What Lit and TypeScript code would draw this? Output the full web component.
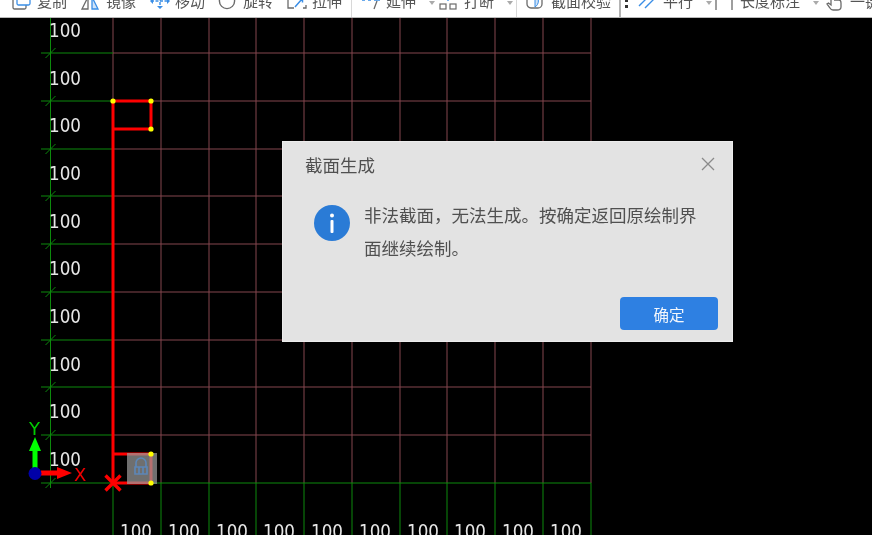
import { LitElement, html, css, svg } from "lit";
import { customElement } from "lit/decorators.js";

const XS = [113, 161, 209, 256, 304, 352, 400, 447, 495, 543, 591];
const YS = [53, 101, 149, 196, 244, 292, 340, 387, 435, 483];
const PINK = "#84464f";
const GREEN = "#0c8a0c";

type Tool = { w: number; label: string; caret?: boolean; icon: unknown; sep?: "thin" | "thick" };
const G = "#6b6b6b";
const B = "#3a8ee6";
const ic = (body: unknown) => svg`<svg class="ico" viewBox="0 0 20 24" width="20" height="24">${body}</svg>`;

const TOOLS: Tool[] = [
  { w: 69, label: "复制", icon: ic(svg`<rect x="1" y="4" width="13" height="13" rx="1.5" fill="none" stroke=${G} stroke-width="1.3"/><rect x="5" y="0" width="13" height="13" rx="1.5" fill="#fff" stroke=${B} stroke-width="1.3"/>`) },
  { w: 69, label: "镜像", icon: ic(svg`<path d="M1 17 L7 5 V17 Z" fill="none" stroke=${G} stroke-width="1.3"/><path d="M17 17 L11 5 V17 Z" fill="#cfe3f8" stroke=${B} stroke-width="1.3"/>`) },
  { w: 68, label: "移动", icon: ic(svg`<path d="M10 1 V16 M1 9 H19" stroke=${B} stroke-width="1.4" stroke-dasharray="3 1.5" fill="none"/><path d="M7 14 L10 17 L13 14 Z M3 6 L0 9 L3 12 Z M17 6 L20 9 L17 12 Z" fill=${B}/>`) },
  { w: 69, label: "旋转", icon: ic(svg`<circle cx="9" cy="9" r="7.6" fill="none" stroke=${G} stroke-width="1.4"/>`) },
  { w: 74, label: "拉伸", icon: ic(svg`<path d="M7 4 H1 V16 H7 M13 4 H19 V7 M19 13 V16 H16" fill="none" stroke=${G} stroke-width="1.3"/><path d="M8 15 L15 7 M12 7 H15.5 V10.5" fill="none" stroke=${B} stroke-width="1.5"/>`), sep: "thin" },
  { w: 78, label: "延伸", caret: true, icon: ic(svg`<path d="M1 8 H4 M7 8 H10 M13 8 H19" stroke=${B} stroke-width="1.4" fill="none"/><path d="M16 9 L13 17" stroke=${G} stroke-width="1.3" fill="none"/>`) },
  { w: 87, label: "打断", caret: true, icon: ic(svg`<rect x="1" y="12" width="6" height="5" fill="none" stroke=${G} stroke-width="1.2"/><rect x="11" y="12" width="6" height="5" fill="none" stroke=${G} stroke-width="1.2"/><path d="M9 2 V9" stroke=${B} stroke-width="1.3"/>`), sep: "thin" },
  { w: 95, label: "截面校验", icon: ic(svg`<rect x="1" y="2" width="15" height="14" rx="4" fill="none" stroke=${G} stroke-width="1.3"/><path d="M9 3 A7 7 0 0 1 9 15 Z" fill="#cfe3f8" stroke=${B} stroke-width="1"/>`), sep: "thick" },
  { w: 77, label: "平行", caret: true, icon: ic(svg`<path d="M1 14 L12 3 M7 16 L18 5" stroke=${B} stroke-width="1.4" fill="none"/>`) },
  { w: 110, label: "长度标注", caret: true, icon: ic(svg`<path d="M1 4 V18 M17 4 V18" stroke=${G} stroke-width="1.3"/><path d="M2 7 H16" stroke=${B} stroke-width="1.4"/>`) },
  { w: 60, label: "一键", icon: ic(svg`<path d="M6 8 V4 M9 8 H14 Q16 8 16 11 V15 Q16 18 12 18 H8 Q6 18 5 16 L2 12 L3.5 11 L6 13 V8" fill="none" stroke=${G} stroke-width="1.3"/>`) },
];

@customElement("app-root")
export class AppRoot extends LitElement {
  static styles = css`
    :host {
      display: block;
      position: relative;
      width: 872px;
      height: 535px;
      overflow: hidden;
      background: #000;
      font-family: "Liberation Sans", "Noto Sans CJK SC", sans-serif;
    }
    .toolbar {
      display: flex;
      align-items: flex-end;
      box-sizing: border-box;
      height: 18px;
      padding: 0 0 5px 12px;
      background: #fff;
      border-bottom: 1px solid #b9b9b9;
      overflow: hidden;
      filter: blur(0.45px);
    }
    .tool {
      flex: none;
      position: relative;
      display: flex;
      align-items: flex-end;
      gap: 5px;
      height: 24px;
      color: #555;
      font-size: 15px;
      line-height: 20px;
      white-space: nowrap;
    }
    .ico { flex: none; margin-bottom: -4px; }
    .caret {
      width: 0;
      height: 0;
      margin: 0 0 7px 8px;
      border-left: 3.5px solid transparent;
      border-right: 3.5px solid transparent;
      border-top: 4px solid #aaa;
    }
    .thin::after,
    .thick::after {
      content: "";
      position: absolute;
      top: 0;
      bottom: -5px;
      right: 9px;
      width: 1px;
      background: #d8d8d8;
    }
    .thick::after { width: 2px; right: 0; background: #b4b4b4; }
    .grip {
      flex: none;
      width: 4px;
      height: 24px;
      margin: 0 9px 0 4px;
      padding-bottom: 4px;
      box-sizing: border-box;
      display: flex;
      flex-direction: column;
      justify-content: flex-end;
      gap: 3px;
    }
    .grip i { width: 3px; height: 3px; background: #333; }
    .plot { display: block; filter: blur(0.3px); }
    .plot text { font-family: "DejaVu Sans", sans-serif; }
    .dialog {
      position: absolute;
      left: 282px;
      top: 141px;
      width: 451px;
      height: 201px;
      box-sizing: border-box;
      padding: 10px 14px 11px 22px;
      display: flex;
      flex-direction: column;
      background: #e3e3e3;
      border: 1px solid #ececec;
      color: #505050;
      filter: blur(0.3px);
    }
    .head {
      display: flex;
      align-items: center;
      justify-content: space-between;
      height: 24px;
      font-size: 17.5px;
    }
    .close { display: block; margin-right: 2px; }
    .body {
      display: flex;
      gap: 14px;
      margin-top: 24px;
      padding-right: 21px;
      font-size: 17.5px;
      line-height: 33px;
      flex: 1;
    }
    .info { flex: none; margin: 5px 0 0 9px; }
    .foot { display: flex; justify-content: flex-end; }
    .ok {
      width: 98px;
      height: 33px;
      padding: 0;
      border: 0;
      border-radius: 4px;
      background: #2e80e2;
      color: #f2f6fc;
      font: inherit;
      font-size: 15.5px;
    }
  `;

  private plot() {
    const labelYs = YS.map((_, i) => 37 + i * 47.66);
    const dots: [number, number][] = [[113, 101], [151, 101], [151, 129], [151, 454], [151, 483]];
    return svg`
      ${XS.map((x) => svg`<line x1=${x} y1="18" x2=${x} y2="483" stroke=${PINK} stroke-width="1"/>`)}
      ${YS.map((y) => svg`<line x1="113" y1=${y} x2="591" y2=${y} stroke=${y === 483 ? GREEN : PINK} stroke-width="1"/>`)}
      ${XS.map((x) => svg`<line x1=${x} y1="483" x2=${x} y2="535" stroke=${GREEN} stroke-width="1"/>`)}
      ${YS.map((y) => svg`<line x1="41" y1=${y} x2="113" y2=${y} stroke=${GREEN} stroke-width="1"/>
        <line x1="45.5" y1=${y + 5} x2="55.5" y2=${y - 5} stroke=${GREEN} stroke-width="1"/>`)}
      <line x1="50.5" y1="18" x2="50.5" y2="488" stroke=${GREEN} stroke-width="1"/>

      ${labelYs.map((y) => svg`<text x="49" y=${y} font-size="19.5" textLength="32" lengthAdjust="spacingAndGlyphs" fill="#e6e6e6">100</text>`)}
      ${XS.slice(0, 10).map((x) => svg`<text x=${x + 7} y="537.5" font-size="19.5" textLength="32" lengthAdjust="spacingAndGlyphs" fill="#e6e6e6">100</text>`)}

      <path d="M113 483 V101 H151 V129 L113 129 M113 454 H151 V483 H113" fill="none" stroke="#f00" stroke-width="3"/>
      <rect x="127" y="453" width="30" height="31" fill="#9a9a9a" fill-opacity="0.72"/>
      <path d="M136 467 V463 A5 5 0 0 1 146 463 V467 M135 467 H147 V474 H135 Z M139 467 V474 M143 467 V474" fill="none" stroke="#5d87b8" stroke-width="1.6"/>
      <path d="M105.500 475.500 L120.500 490.500 M120.500 475.500 L105.500 490.500" stroke="#f00" stroke-width="3.400"/>
      ${dots.map(([x, y]) => svg`<circle cx=${x} cy=${y} r="2.600" fill="#ff0"/>`)}

      <path d="M32.500 473 V451 H29 L35 437 L41 451 H37.500 V473 Z" fill="#0f0"/>
      <path d="M41 470.500 H57 V467 L72 473 L57 479 V475.500 H41 Z" fill="#f00"/>
      <circle cx="35" cy="473.500" r="6.500" fill="#0000a8"/>
      <text x="29" y="435" font-size="18" fill="#0c0">Y</text>
      <text x="74" y="481" font-size="18" fill="#e00">X</text>
    `;
  }

  render() {
    return html`
      <div class="toolbar">
        ${TOOLS.map(
          (t, i) => html`
            ${i === 8 ? html`<div class="grip"><i></i><i></i></div>` : ""}
            <div class="tool ${t.sep ?? ""}" style="width:${t.w}px">
              ${t.icon}<span>${t.label}</span>${t.caret ? html`<span class="caret"></span>` : ""}
            </div>
          `
        )}
      </div>
      <svg class="plot" width="872" height="517" viewBox="0 18 872 517">${this.plot()}</svg>
      <div class="dialog">
        <div class="head">
          <span>截面生成</span>
          <svg class="close" width="16" height="16" viewBox="0 0 16 16">
            <path d="M2 2 L14 14 M14 2 L2 14" stroke="#8a8a8a" stroke-width="1.3" fill="none"/>
          </svg>
        </div>
        <div class="body">
          <svg class="info" width="36" height="36" viewBox="0 0 36 36">
            <circle cx="18" cy="18" r="18" fill="#2a7bd6"/>
            <circle cx="18" cy="10.500" r="2" fill="#fff"/>
            <rect x="16.500" y="15" width="3" height="13" rx="1" fill="#fff"/>
          </svg>
          <div>非法截面，无法生成。按确定返回原绘制界面继续绘制。</div>
        </div>
        <div class="foot"><button class="ok">确定</button></div>
      </div>
    `;
  }
}
